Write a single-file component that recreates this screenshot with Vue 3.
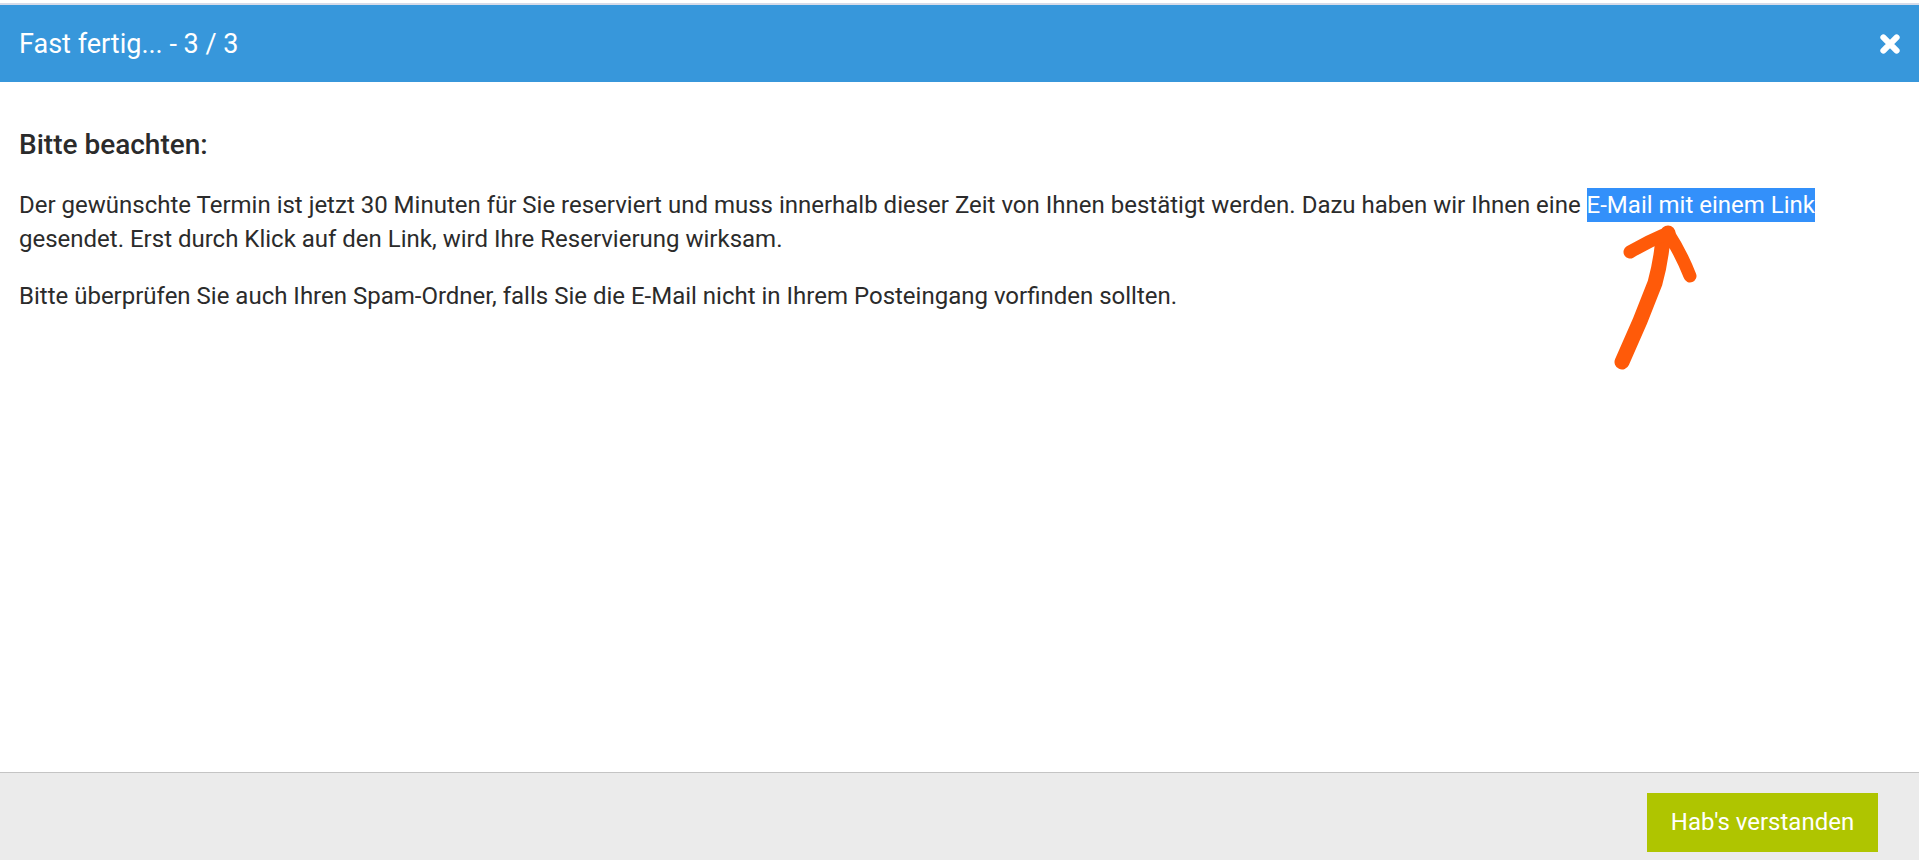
<script setup>
const title = 'Fast fertig... - 3 / 3'
</script>

<template>
  <div class="page">
    <header class="head">
      <span class="title">{{ title }}</span>
      <svg class="close" viewBox="0 0 20 20" aria-label="Schließen">
        <path d="M4 4 L16 16 M16 4 L4 16" />
      </svg>
    </header>
    <main class="body">
      <h2>Bitte beachten:</h2>
      <p>Der gewünschte Termin ist jetzt 30 Minuten für Sie reserviert und muss innerhalb dieser Zeit von Ihnen bestätigt werden. Dazu haben wir Ihnen eine <span class="sel">E-Mail mit einem Link</span> gesendet. Erst durch Klick auf den Link, wird Ihre Reservierung wirksam.</p>
      <p>Bitte überprüfen Sie auch Ihren Spam-Ordner, falls Sie die E-Mail nicht in Ihrem Posteingang vorfinden sollten.</p>
      <svg class="arrow" viewBox="0 0 90 150">
        <path class="stem" d="M11 139 L29 98 L44 60 Q49 42 51 24 L57 10" />
        <path d="M19 29 Q38 18 57 10 Q70 30 79 53" />
      </svg>
    </main>
    <footer class="foot">
      <button class="btn">Hab's verstanden</button>
    </footer>
  </div>
</template>

<style scoped>
.page {
  height: 860px;
  display: flex;
  flex-direction: column;
  padding-top: 3px;
  box-sizing: border-box;
  background: #fff;
  font-family: Roboto, "Liberation Sans", sans-serif;
  color: #2b2b2b;
}
.head {
  flex: none;
  box-sizing: border-box;
  border-top: 2px solid #d6dbe9;
  background: #3797db;
  color: #fff;
  display: flex;
  align-items: center;
  justify-content: space-between;
  padding: 0 20px 0 19px;
  height: 79px;
}
.title { font-size: 27px; }
.close { width: 22px; height: 22px; margin-right: -2px; fill: none; stroke: #fff; stroke-width: 5.5; stroke-linecap: round; }
.body {
  flex: 1;
  position: relative;
  padding: 46px 20px 0 19px;
}
h2 {
  margin: 0 0 26px;
  font-size: 28px;
  line-height: 34px;
  font-weight: 500;
}
p {
  margin: 0 0 23px;
  font-size: 24px;
  line-height: 34px;
}
.sel {
  display: inline-block;
  background: #3390fa;
  color: #fff;
}
.arrow {
  position: absolute;
  left: 1611px;
  top: 141px;
  width: 90px;
  height: 150px;
  fill: none;
  stroke: #ff5a09;
  stroke-width: 13;
  stroke-linecap: round;
  stroke-linejoin: round;
}
.stem { stroke-width: 15; }
.foot {
  flex: none;
  height: 88px;
  box-sizing: border-box;
  background: #ebebeb;
  border-top: 1px solid #c4c4c4;
  display: flex;
  justify-content: flex-end;
  padding: 20px 41px 0 0;
}
.btn {
  width: 231px;
  height: 59px;
  border: 0;
  border-radius: 0;
  background: #afc500;
  color: #fff;
  font-family: inherit;
  font-size: 24px;
  padding: 0 0 2px;
}
</style>
